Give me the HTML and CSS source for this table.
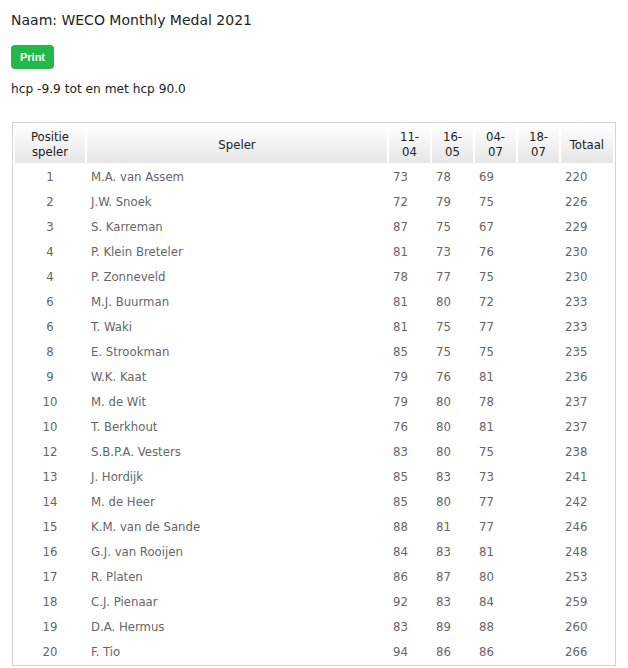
FILE: index.html
```html
<!DOCTYPE html>
<html>
<head>
<meta charset="utf-8">
<link rel="stylesheet" href="styles.css">
</head>
<body>
<h1 class="title">Naam: WECO Monthly Medal 2021</h1>
<button class="print">Print</button>
<p class="hcp">hcp -9.9 tot en met hcp 90.0</p>
<table class="results">
<colgroup>
<col class="c-pos"><col class="c-name"><col class="c-r"><col class="c-r"><col class="c-r"><col class="c-r"><col class="c-tot">
</colgroup>
<thead>
<tr><th>Positie<br>speler</th><th>Speler</th><th>11-<br>04</th><th>16-<br>05</th><th>04-<br>07</th><th>18-<br>07</th><th>Totaal</th></tr>
</thead>
<tbody>
<tr><td class="pos">1</td><td>M.A. van Assem</td><td>73</td><td>78</td><td>69</td><td></td><td>220</td></tr>
<tr><td class="pos">2</td><td>J.W. Snoek</td><td>72</td><td>79</td><td>75</td><td></td><td>226</td></tr>
<tr><td class="pos">3</td><td>S. Karreman</td><td>87</td><td>75</td><td>67</td><td></td><td>229</td></tr>
<tr><td class="pos">4</td><td>P. Klein Breteler</td><td>81</td><td>73</td><td>76</td><td></td><td>230</td></tr>
<tr><td class="pos">4</td><td>P. Zonneveld</td><td>78</td><td>77</td><td>75</td><td></td><td>230</td></tr>
<tr><td class="pos">6</td><td>M.J. Buurman</td><td>81</td><td>80</td><td>72</td><td></td><td>233</td></tr>
<tr><td class="pos">6</td><td>T. Waki</td><td>81</td><td>75</td><td>77</td><td></td><td>233</td></tr>
<tr><td class="pos">8</td><td>E. Strookman</td><td>85</td><td>75</td><td>75</td><td></td><td>235</td></tr>
<tr><td class="pos">9</td><td>W.K. Kaat</td><td>79</td><td>76</td><td>81</td><td></td><td>236</td></tr>
<tr><td class="pos">10</td><td>M. de Wit</td><td>79</td><td>80</td><td>78</td><td></td><td>237</td></tr>
<tr><td class="pos">10</td><td>T. Berkhout</td><td>76</td><td>80</td><td>81</td><td></td><td>237</td></tr>
<tr><td class="pos">12</td><td>S.B.P.A. Vesters</td><td>83</td><td>80</td><td>75</td><td></td><td>238</td></tr>
<tr><td class="pos">13</td><td>J. Hordijk</td><td>85</td><td>83</td><td>73</td><td></td><td>241</td></tr>
<tr><td class="pos">14</td><td>M. de Heer</td><td>85</td><td>80</td><td>77</td><td></td><td>242</td></tr>
<tr><td class="pos">15</td><td>K.M. van de Sande</td><td>88</td><td>81</td><td>77</td><td></td><td>246</td></tr>
<tr><td class="pos">16</td><td>G.J. van Rooijen</td><td>84</td><td>83</td><td>81</td><td></td><td>248</td></tr>
<tr><td class="pos">17</td><td>R. Platen</td><td>86</td><td>87</td><td>80</td><td></td><td>253</td></tr>
<tr><td class="pos">18</td><td>C.J. Pienaar</td><td>92</td><td>83</td><td>84</td><td></td><td>259</td></tr>
<tr><td class="pos">19</td><td>D.A. Hermus</td><td>83</td><td>89</td><td>88</td><td></td><td>260</td></tr>
<tr><td class="pos">20</td><td>F. Tio</td><td>94</td><td>86</td><td>86</td><td></td><td>266</td></tr>
</tbody>
</table>
</body>
</html>
```
FILE: styles.css
```css
body {
  margin: 8px;
  font-family: "DejaVu Sans", Verdana, sans-serif;
  color: #222;
  background: #fff;
}
.title {
  font-size: 14px;
  font-weight: normal;
  margin: 3px 0 0 3px;
  line-height: 18px;
  color: #222;
}
.print {
  display: block;
  margin: 16px 0 0 3px;
  width: 43px;
  height: 24px;
  padding: 0;
  border: none;
  border-radius: 4px;
  background: #22b84a;
  color: #fff;
  font-family: "Liberation Sans", Arial, sans-serif;
  font-weight: bold;
  font-size: 11px;
}
.hcp {
  font-size: 12.2px;
  margin: 12px 0 0 3px;
  line-height: 16px;
  color: #222;
}
.results {
  margin: 25px 0 0 4px;
  width: 604px;
  table-layout: fixed;
  border: 1px solid #d4d4d4;
  border-collapse: separate;
  border-spacing: 2px;
  font-family: "DejaVu Sans Condensed", "DejaVu Sans", sans-serif;
  font-stretch: condensed;
  font-size: 13px;
}
.c-pos { width: 70px; }
.c-name { width: 300px; }
.c-r { width: 41px; }
.results th {
  font-weight: normal;
  color: #222;
  background: linear-gradient(#ffffff, #e6e6e6);
  line-height: 15px;
  padding: 4px 2px 4px;
  text-align: center;
}
.results td {
  color: #666;
  height: 21px;
  padding: 1px 4px;
  text-align: left;
  line-height: 15px;
}
.results td.pos {
  text-align: center;
}
```
